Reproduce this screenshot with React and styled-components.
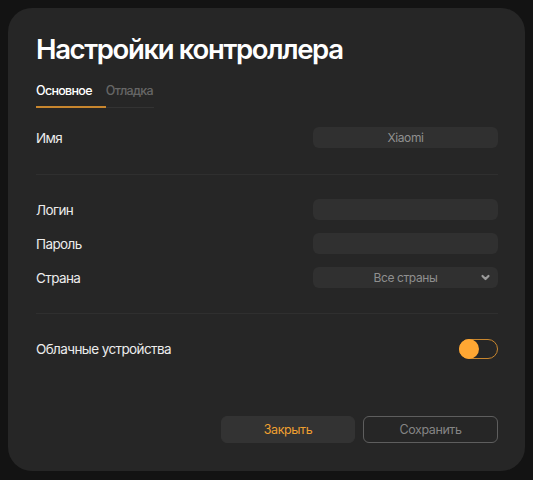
import styled, { createGlobalStyle } from "styled-components"

const Global = createGlobalStyle`
    html, body {
        margin: 0;
        padding: 0;
        background: #131313;
        font-family: Inter, "Noto Sans", sans-serif;
    }
`

const Panel = styled.div`
    margin: 8px;
    width: 517px;
    height: 463px;
    box-sizing: border-box;
    background: #262626;
    border-radius: 24px;
    padding: 23px 27px 28px 28px;
    display: flex;
    flex-direction: column;
`

const Title = styled.h1`
    margin: 0;
    font-size: 27.5px;
    line-height: 36px;
    font-weight: 600;
    color: #ffffff;
    letter-spacing: -1.35px;
`

const Tabs = styled.div`
    display: flex;
    margin-top: 16px;
    margin-bottom: 19px;
    align-self: flex-start;
    border-bottom: 1px solid #333333;
`

const Tab = styled.div`
    font-size: 12.5px;
    line-height: 16px;
    font-weight: 500;
    letter-spacing: -0.7px;
    padding: 0 14px 7px 0;
    margin-bottom: -1px;
    color: ${p => (p.active ? "#ffffff" : "#666666")};
    border-bottom: 2px solid ${p => (p.active ? "#c8862e" : "transparent")};
    &:last-child {
        padding-right: 1px;
    }
`

const Rows = styled.div`
    display: flex;
    flex-direction: column;
    gap: 13px;
`

const Row = styled.div`
    display: flex;
    align-items: center;
    justify-content: space-between;
`

const Label = styled.div`
    font-size: 13.5px;
    color: #ececec;
    font-weight: 400;
    letter-spacing: -0.6px;
`

const Field = styled.div`
    position: relative;
    width: 185px;
    height: 21px;
    border-radius: 6px;
    background: #303030;
    color: #8f8f8f;
    font-size: 12px;
    letter-spacing: -0.4px;
    display: flex;
    align-items: center;
    justify-content: center;
`

const Chevron = styled.svg`
    position: absolute;
    right: 7px;
    top: 6px;
`

const Divider = styled.div`
    height: 1px;
    background: #2f2f2f;
    margin: ${p => p.m};
`

const Toggle = styled.div`
    width: 39px;
    height: 20px;
    box-sizing: border-box;
    border: 1px solid #c8862e;
    border-radius: 10px;
    position: relative;
    &::before {
        content: "";
        position: absolute;
        left: -1px;
        top: -1px;
        width: 20px;
        height: 20px;
        border-radius: 50%;
        background: #ffa733;
    }
`

const Footer = styled.div`
    margin-top: auto;
    display: flex;
    justify-content: flex-end;
    gap: 8px;
`

const Button = styled.button`
    width: ${p => p.w}px;
    height: 27px;
    box-sizing: border-box;
    border-radius: 6px;
    font-family: inherit;
    font-size: 12.5px;
    letter-spacing: -0.4px;
    cursor: pointer;
    background: ${p => (p.outline ? "transparent" : "#333333")};
    border: 1px solid ${p => (p.outline ? "#5e5e5e" : "#333333")};
    color: ${p => (p.outline ? "#858585" : "#f0a030")};
`

export default function App() {
    return (
        <>
            <Global />
            <Panel>
                <Title>Настройки контроллера</Title>
                <Tabs>
                    <Tab active>Основное</Tab>
                    <Tab>Отладка</Tab>
                </Tabs>
                <Row>
                    <Label>Имя</Label>
                    <Field>Xiaomi</Field>
                </Row>
                <Divider m="26px 0 24px" />
                <Rows>
                    <Row>
                        <Label>Логин</Label>
                        <Field />
                    </Row>
                    <Row>
                        <Label>Пароль</Label>
                        <Field />
                    </Row>
                    <Row>
                        <Label>Страна</Label>
                        <Field>
                            Все страны
                            <Chevron width="11" height="9" viewBox="0 0 11 9">
                                <path d="M2.5 3 L5.5 6 L8.5 3" fill="none" stroke="#9a9a9a" strokeWidth="2.2" strokeLinecap="round" strokeLinejoin="round" />
                            </Chevron>
                        </Field>
                    </Row>
                </Rows>
                <Divider m="25px 0 25px" />
                <Row>
                    <Label>Облачные устройства</Label>
                    <Toggle />
                </Row>
                <Footer>
                    <Button w={134}>Закрыть</Button>
                    <Button w={135} outline>Сохранить</Button>
                </Footer>
            </Panel>
        </>
    )
}
